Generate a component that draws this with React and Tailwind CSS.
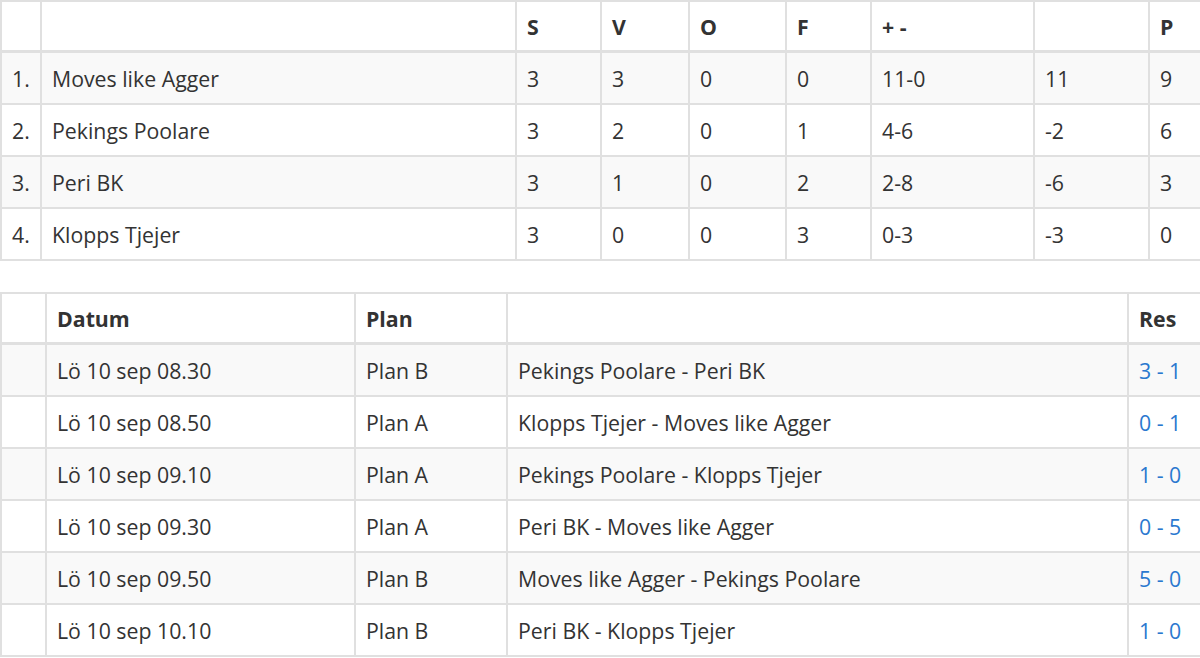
import React from 'react';

const standings = [
    { pos: '1.', team: 'Moves like Agger', s: 3, v: 3, o: 0, f: 0, goals: '11-0', diff: 11, p: 9 },
    { pos: '2.', team: 'Pekings Poolare', s: 3, v: 2, o: 0, f: 1, goals: '4-6', diff: -2, p: 6 },
    { pos: '3.', team: 'Peri BK', s: 3, v: 1, o: 0, f: 2, goals: '2-8', diff: -6, p: 3 },
    { pos: '4.', team: 'Klopps Tjejer', s: 3, v: 0, o: 0, f: 3, goals: '0-3', diff: -3, p: 0 },
];

const matches = [
    { date: 'Lö 10 sep 08.30', plan: 'Plan B', game: 'Pekings Poolare - Peri BK', res: '3 - 1' },
    { date: 'Lö 10 sep 08.50', plan: 'Plan A', game: 'Klopps Tjejer - Moves like Agger', res: '0 - 1' },
    { date: 'Lö 10 sep 09.10', plan: 'Plan A', game: 'Pekings Poolare - Klopps Tjejer', res: '1 - 0' },
    { date: 'Lö 10 sep 09.30', plan: 'Plan A', game: 'Peri BK - Moves like Agger', res: '0 - 5' },
    { date: 'Lö 10 sep 09.50', plan: 'Plan B', game: 'Moves like Agger - Pekings Poolare', res: '5 - 0' },
    { date: 'Lö 10 sep 10.10', plan: 'Plan B', game: 'Peri BK - Klopps Tjejer', res: '1 - 0' },
];

const th = 'border-r-2 border-b-[3px] border-[#e0e0e0] pl-[10px] pr-2 pt-[11px] pb-[9px] leading-[28px] text-left font-bold';
const td = 'border-r-2 border-b-2 border-[#e0e0e0] pl-[10px] pr-2 pt-[12px] pb-[10px] leading-[28px] text-left font-normal whitespace-nowrap';

export default function App() {
    return (
        <div
            className="w-[1200px] h-[658px] overflow-hidden bg-white text-[21.3px] text-[#333]"
            style={{ fontFamily: '"Open Sans", "Noto Sans", sans-serif' }}
        >
            <table className="table-fixed border-separate border-spacing-0 border-l-2 border-t-2 border-[#e0e0e0] w-[1202px]">
                <colgroup>
                    <col className="w-[40px]" />
                    <col className="w-[475px]" />
                    <col className="w-[85px]" />
                    <col className="w-[88px]" />
                    <col className="w-[97px]" />
                    <col className="w-[85px]" />
                    <col className="w-[163px]" />
                    <col className="w-[115px]" />
                    <col className="w-[52px]" />
                </colgroup>
                <thead>
                    <tr>
                        <th className={th}></th>
                        <th className={th}></th>
                        <th className={th}>S</th>
                        <th className={th}>V</th>
                        <th className={th}>O</th>
                        <th className={th}>F</th>
                        <th className={th}>+ -</th>
                        <th className={th}></th>
                        <th className={th}>P</th>
                    </tr>
                </thead>
                <tbody>
                    {standings.map((r, i) => (
                        <tr key={r.team} className={i % 2 === 0 ? 'bg-[#f9f9f9]' : 'bg-white'}>
                            <td className={td}>{r.pos}</td>
                            <td className={td}>{r.team}</td>
                            <td className={td}>{r.s}</td>
                            <td className={td}>{r.v}</td>
                            <td className={td}>{r.o}</td>
                            <td className={td}>{r.f}</td>
                            <td className={td}>{r.goals}</td>
                            <td className={td}>{r.diff}</td>
                            <td className={td}>{r.p}</td>
                        </tr>
                    ))}
                </tbody>
            </table>

            <table className="mt-[31px] table-fixed border-separate border-spacing-0 border-l-2 border-t-2 border-[#e0e0e0] w-[1202px]">
                <colgroup>
                    <col className="w-[45px]" />
                    <col className="w-[309px]" />
                    <col className="w-[152px]" />
                    <col className="w-[621px]" />
                    <col className="w-[73px]" />
                </colgroup>
                <thead>
                    <tr>
                        <th className={th}></th>
                        <th className={th}>Datum</th>
                        <th className={th}>Plan</th>
                        <th className={th}></th>
                        <th className={th}>Res</th>
                    </tr>
                </thead>
                <tbody>
                    {matches.map((m, i) => (
                        <tr key={m.date} className={i % 2 === 0 ? 'bg-[#f9f9f9]' : 'bg-white'}>
                            <td className={td}></td>
                            <td className={td}>{m.date}</td>
                            <td className={td}>{m.plan}</td>
                            <td className={td}>{m.game}</td>
                            <td className={td}>
                                <a href="#" className="text-[#2a78cf]">{m.res}</a>
                            </td>
                        </tr>
                    ))}
                </tbody>
            </table>
        </div>
    );
}
